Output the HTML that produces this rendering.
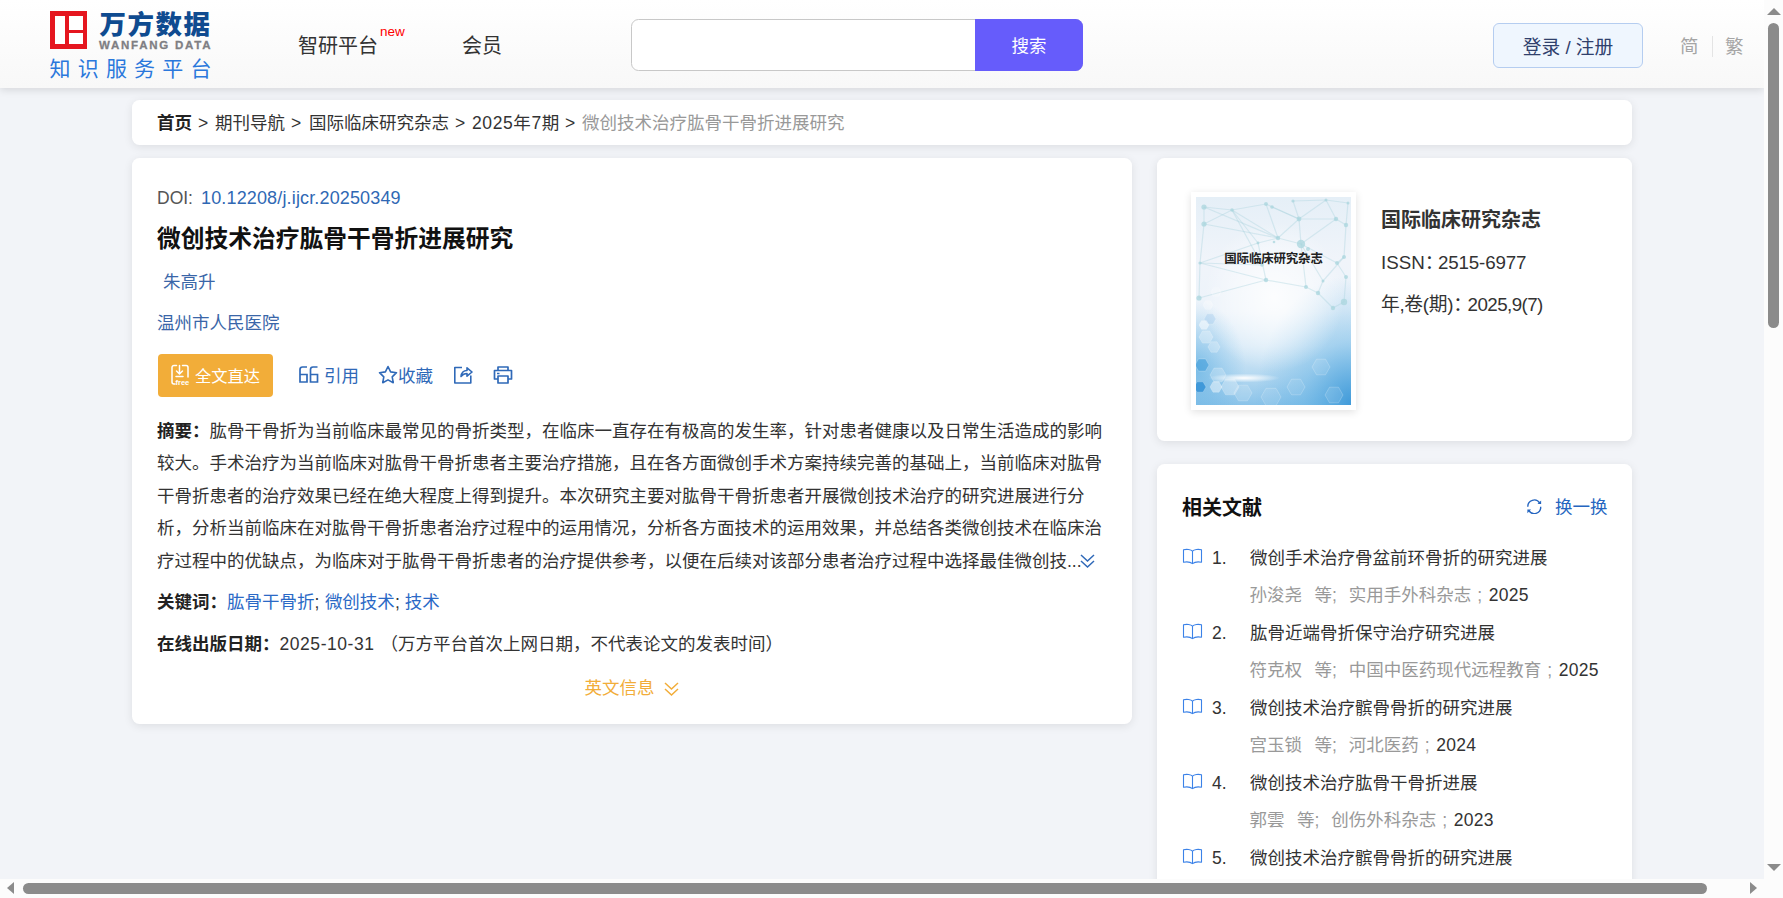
<!DOCTYPE html>
<html lang="zh-CN">
<head>
<meta charset="utf-8">
<title>微创技术治疗肱骨干骨折进展研究</title>
<style>
*{box-sizing:border-box;margin:0;padding:0}
html,body{width:1783px;height:898px;overflow:hidden}
body{background:#f2f4f8;font-family:"Liberation Sans","Noto Sans CJK SC",sans-serif;color:#333;position:relative;font-size:17.5px}
a{text-decoration:none;color:inherit}
.abs{position:absolute}
/* header */
#hdr{position:absolute;left:0;top:0;width:1764px;height:88px;background:linear-gradient(#ffffff,#f8f8f8);box-shadow:0 2px 8px rgba(0,0,0,.12)}
.logo-sq{position:absolute;left:50px;top:11px;width:37px;height:38px;background:#e5161f}
.logo-sq i{position:absolute;background:#fff}
.logo-cn{position:absolute;left:99.5px;top:6.500px;font-size:26.500px;font-weight:900;color:#0f4b90;letter-spacing:1.500px;line-height:36px;white-space:nowrap}
.logo-en{position:absolute;left:99px;top:38px;font-size:11.500px;font-weight:bold;color:#7f7f83;letter-spacing:1.750px;-webkit-text-stroke:.3px #7f7f83;line-height:14px;white-space:nowrap}
.logo-sub{position:absolute;left:49.500px;top:56px;font-size:21px;color:#2a78dc;letter-spacing:7.200px;line-height:26px;white-space:nowrap}
.nav{position:absolute;top:31.500px;font-size:20px;line-height:28px;color:#333;white-space:nowrap}
.new{position:absolute;left:380px;top:23px;font-size:13.5px;line-height:18px;color:#f00}
#sbox{position:absolute;left:631px;top:19px;width:452px;height:52px;border:1px solid #c8c8c8;border-radius:7.500px;background:#fff}
#sbtn{position:absolute;left:975px;top:19px;width:108px;height:52px;background:#665cfb;border-radius:0 7.500px 7.500px 0;color:#fff;font-size:17.500px;line-height:54px;text-align:center}
#login{position:absolute;left:1493px;top:23px;width:150px;height:45px;border:1px solid #b5cdf0;border-radius:6px;background:#eff6fe;color:#30406c;font-size:18.750px;line-height:47.500px;text-align:center}
.lang{position:absolute;top:33.500px;font-size:18.5px;line-height:26px;color:#a5a5a5}
/* cards */
.card{position:absolute;background:#fff;border-radius:7.500px;box-shadow:0 2px 10px rgba(0,0,0,.09)}

#crumb{left:132px;top:100px;width:1500px;height:45px;padding-left:25px;line-height:46px;font-size:17.5px;color:#333;white-space:nowrap}
#crumb b{color:#222}
#crumb .cur{color:#999}
#main{left:132px;top:158px;width:1000px;height:566px}
#main .doi{position:absolute;left:25px;top:27px;line-height:26px;font-size:17.5px;color:#555;white-space:nowrap}
#main .doi a{color:#2f68b4}
#main h1{position:absolute;left:25px;top:63px;font-size:23.75px;line-height:36px;font-weight:bold;color:#111;white-space:nowrap}
#main .au{position:absolute;left:31px;top:111px;font-size:17.5px;line-height:26px;color:#3a66a8;white-space:nowrap}
#main .org{position:absolute;left:25px;top:152px;font-size:17.5px;line-height:26px;color:#3a66a8;white-space:nowrap}
#ftbtn{position:absolute;left:26px;top:196px;width:115px;height:43px;border-radius:4px;background:#f2ad39;color:#fff;font-size:16.25px;line-height:45px;white-space:nowrap}
#ftbtn span{position:absolute;left:37px;top:0}
.op{position:absolute;top:205px;font-size:17.5px;line-height:26px;color:#2f69b8;white-space:nowrap}
.ico{position:absolute}
#abs{position:absolute;left:25px;top:257px;width:960px;font-size:17.5px;line-height:32.400px;color:#333}
#abs b,.row b{color:#222}
.row{position:absolute;left:25px;font-size:17.5px;line-height:26px;color:#333;white-space:nowrap}
.row a{color:#2b69c6}
#en{position:absolute;left:452.500px;top:517px;font-size:17.5px;line-height:26px;color:#f2ad39;white-space:nowrap}
#j{left:1157px;top:158px;width:475px;height:283px}
#cover{position:absolute;left:34px;top:34px;width:165px;height:218px;background:#fff;box-shadow:0 2px 8px rgba(0,0,0,.12)}
#cover svg{position:absolute;left:5px;top:5px}
#j .jn{position:absolute;left:224px;top:48px;font-size:20px;font-weight:bold;line-height:28px;color:#333;white-space:nowrap}
#j .ji{position:absolute;left:224px;font-size:18.750px;line-height:26px;color:#333;white-space:nowrap}
#rel{left:1157px;top:464px;width:475px;height:460px}
#rel h3{position:absolute;left:25px;top:30px;font-size:20px;line-height:28px;font-weight:bold;color:#111}
#rel .chg{position:absolute;left:398px;top:30px;font-size:17.5px;line-height:26px;color:#2565c0;white-space:nowrap}
.it{position:absolute;left:0;width:475px;height:75px}
.it .n{position:absolute;left:55px;top:1px;font-size:17.5px;line-height:26px;color:#333}
.it .t{position:absolute;left:93px;top:1px;font-size:17.5px;line-height:26px;color:#333;white-space:nowrap}
.it .s{position:absolute;left:92.500px;top:38px;font-size:17.5px;line-height:26px;color:#999;white-space:nowrap}
.it .s i{font-style:normal;color:#333}
.it svg{position:absolute;left:25px;top:4px}
/* scrollbars */
#vs{position:absolute;left:1764px;top:0;width:19px;height:879px;background:#fcfcfc}
#hs{position:absolute;left:0;top:879px;width:1783px;height:19px;background:#fcfcfc}
.thumb{position:absolute;background:#8b8b8b;border-radius:6px}
.tri{position:absolute;width:0;height:0;border-style:solid}
.l{letter-spacing:.55px}
.seg{position:absolute;top:0}
</style>
</head>
<body>
<div id="hdr">
  <div class="logo-sq"><i style="left:5px;top:5px;width:10px;height:28px"></i><i style="left:19px;top:5px;width:14px;height:14px"></i><i style="left:19px;top:22px;width:14px;height:11px"></i></div>
  <div class="logo-cn">万方数据</div>
  <div class="logo-en">WANFANG DATA</div>
  <div class="logo-sub">知识服务平台</div>
  <div class="nav" style="left:298px">智研平台</div><div class="new">new</div>
  <div class="nav" style="left:462px">会员</div>
  <div id="sbox"></div><div id="sbtn">搜索</div>
  <div id="login">登录 / 注册</div>
  <div class="lang" style="left:1680px">简</div>
  <div class="abs" style="left:1712px;top:36px;width:1px;height:21px;background:#e4e4e4"></div>
  <div class="lang" style="left:1725px">繁</div>
</div>

<div class="card" id="crumb"><b class="seg" style="left:25px">首页</b><span class="seg" style="left:66px">&gt;</span><span class="seg" style="left:83px">期刊导航</span><span class="seg" style="left:159px">&gt;</span><span class="seg" style="left:177px">国际临床研究杂志</span><span class="seg" style="left:323px">&gt;</span><span class="seg l" style="left:340px;letter-spacing:.6px">2025年7期</span><span class="seg" style="left:433px">&gt;</span><span class="seg cur" style="left:450px">微创技术治疗肱骨干骨折进展研究</span></div>

<div class="card" id="main">
  <div class="doi"><span style="display:inline-block;width:44px">DOI:</span><a style="letter-spacing:.15px;font-size:18px">10.12208/j.ijcr.20250349</a></div>
  <h1>微创技术治疗肱骨干骨折进展研究</h1>
  <div class="au">朱高升</div>
  <div class="org">温州市人民医院</div>
  <div id="ftbtn">
    <svg class="ico" style="left:12px;top:10px" width="22" height="22" viewBox="0 0 22 22" fill="none" stroke="#fff" stroke-width="1.5" stroke-linecap="round" stroke-linejoin="round">
      <path d="M6.5 1.5H4a2 2 0 0 0-2 2v14.5a2 2 0 0 0 2 2h1M12.500 1.500H16a2 2 0 0 1 2 2V13"/>
      <path d="M9.500 1.500v8M6.500 7l3 3 3-3M6 12.500h7"/>
      <text x="5.500" y="20.500" font-family="Liberation Sans, sans-serif" font-size="7.500" font-weight="bold" fill="#fff" stroke="none">free</text>
    </svg>
    <span>全文直达</span>
  </div>
  <svg class="ico" style="left:167px;top:208px" width="20" height="18" viewBox="0 0 20 18" fill="none" stroke="#2f69b8" stroke-width="1.700">
    <path d="M8 1H3.500Q1 1 1 3.500V16h7V8.500H1M18.500 1H14Q11.500 1 11.500 3.500V16h7V8.500h-7"/>
  </svg>
  <div class="op" style="left:192px">引用</div>
  <svg class="ico" style="left:246px;top:207px" width="20" height="20" viewBox="0 0 20 20" fill="none" stroke="#2f69b8" stroke-width="1.600" stroke-linejoin="round">
    <path d="M10 1.500l2.600 5.400 5.900.8-4.300 4.100 1.050 5.900L10 14.900l-5.250 2.800 1.050-5.900L1.500 7.700l5.900-.8z"/>
  </svg>
  <div class="op" style="left:266px">收藏</div>
  <svg class="ico" style="left:321px;top:207px" width="20" height="20" viewBox="0 0 20 20" fill="none" stroke="#2f69b8" stroke-width="1.600" stroke-linejoin="round">
    <path d="M9 2.500H1.800V18h16v-7.500"/>
    <path d="M8 11.500c.5-4 3-6 6-6V2.800L19 7l-5 4.200V8.500c-2.500 0-4.500 1-6 3z"/>
  </svg>
  <svg class="ico" style="left:361px;top:208px" width="20" height="18" viewBox="0 0 20 18" fill="none" stroke="#2f69b8" stroke-width="1.700" stroke-linejoin="round">
    <path d="M5 4.500V1h10v3.500M5 13H1.500V4.500h17V13H15M5 10h10v7H5zM4 7.500h2.500"/>
  </svg>
  <div id="abs"><b>摘要：</b>肱骨干骨折为当前临床最常见的骨折类型，在临床一直存在有极高的发生率，针对患者健康以及日常生活造成的影响较大。手术治疗为当前临床对肱骨干骨折患者主要治疗措施，且在各方面微创手术方案持续完善的基础上，当前临床对肱骨干骨折患者的治疗效果已经在绝大程度上得到提升。本次研究主要对肱骨干骨折患者开展微创技术治疗的研究进展进行分析，分析当前临床在对肱骨干骨折患者治疗过程中的运用情况，分析各方面技术的运用效果，并总结各类微创技术在临床治疗过程中的优缺点，为临床对于肱骨干骨折患者的治疗提供参考，以便在后续对该部分患者治疗过程中选择最佳微创技...<svg width="17" height="16" viewBox="0 0 17 16" fill="none" stroke="#2f69b8" stroke-width="1.500" style="vertical-align:-2px;margin-left:-2.500px"><path d="M2 2l6.500 6L15 2M2 8l6.500 6L15 8"/></svg></div>
  <div class="row kw" style="top:431px"><b>关键词：</b><a>肱骨干骨折</a>;<a style="margin-left:5.500px">微创技术</a>;<a style="margin-left:5px">技术</a></div>
  <div class="row" style="top:473px"><b>在线出版日期：</b><span class="l">2025-10-31</span><span style="margin-left:6px">（万方平台首次上网日期，不代表论文的发表时间）</span></div>
  <div id="en">英文信息 <svg width="17" height="16" viewBox="0 0 17 16" fill="none" stroke="#f2ad39" stroke-width="1.500" style="vertical-align:-3px;margin-left:4px"><path d="M2 2l6.500 6L15 2M2 8l6.500 6L15 8"/></svg></div>
</div>

<div class="card" id="j">
  <div id="cover"><!--COVER--><svg width="155" height="208" viewBox="0 0 155 208">
<defs>
<linearGradient id="cg" x1="0" y1="0" x2="0" y2="1"><stop offset="0" stop-color="#e5eff7"/><stop offset=".3" stop-color="#f0f4fa"/><stop offset=".55" stop-color="#ecf3fa"/><stop offset=".72" stop-color="#d6e9f7"/><stop offset=".87" stop-color="#b2d7f0"/><stop offset="1" stop-color="#8ac3e9"/></linearGradient>
<radialGradient id="cw" cx=".5" cy=".5" r=".5"><stop offset="0" stop-color="#fff" stop-opacity=".85"/><stop offset=".6" stop-color="#fff" stop-opacity=".4"/><stop offset="1" stop-color="#fff" stop-opacity="0"/></radialGradient>
<radialGradient id="cb" cx="1" cy="1" r=".62"><stop offset="0" stop-color="#3d98d8" stop-opacity=".95"/><stop offset=".5" stop-color="#5aaee3" stop-opacity=".4"/><stop offset="1" stop-color="#5aaee3" stop-opacity="0"/></radialGradient>
<radialGradient id="cl" cx="0" cy=".82" r=".32"><stop offset="0" stop-color="#4fa8e0" stop-opacity=".6"/><stop offset="1" stop-color="#5aaee3" stop-opacity="0"/></radialGradient>
<radialGradient id="cf" cx=".5" cy=".5" r=".5"><stop offset="0" stop-color="#fff" stop-opacity="1"/><stop offset="1" stop-color="#fff" stop-opacity="0"/></radialGradient>
</defs>
<rect width="155" height="208" fill="url(#cg)"/>
<rect width="155" height="208" fill="url(#cb)"/>
<rect width="155" height="208" fill="url(#cl)"/>
<ellipse cx="78" cy="100" rx="70" ry="75" fill="url(#cw)"/>
<g stroke="#a9d3dd" stroke-width="1.200" stroke-opacity=".38"><line x1="8" y1="10" x2="36" y2="13"/><line x1="36" y1="13" x2="70" y2="7"/><line x1="8" y1="10" x2="8" y2="27"/><line x1="36" y1="13" x2="8" y2="27"/><line x1="8" y1="27" x2="4" y2="66"/><line x1="36" y1="13" x2="62" y2="46"/><line x1="36" y1="13" x2="82" y2="41"/><line x1="70" y1="7" x2="82" y2="41"/><line x1="76" y1="10" x2="103" y2="22"/><line x1="97" y1="4" x2="103" y2="22"/><line x1="103" y1="22" x2="82" y2="41"/><line x1="103" y1="22" x2="105" y2="47"/><line x1="82" y1="41" x2="105" y2="47"/><line x1="82" y1="41" x2="62" y2="46"/><line x1="62" y1="46" x2="4" y2="66"/><line x1="4" y1="66" x2="3" y2="101"/><line x1="62" y1="46" x2="70" y2="83"/><line x1="105" y1="47" x2="110" y2="90"/><line x1="105" y1="47" x2="127" y2="84"/><line x1="110" y1="90" x2="122" y2="96"/><line x1="122" y1="96" x2="127" y2="84"/><line x1="103" y1="22" x2="140" y2="22"/><line x1="140" y1="22" x2="150" y2="28"/><line x1="150" y1="28" x2="148" y2="60"/><line x1="105" y1="47" x2="140" y2="22"/><line x1="127" y1="84" x2="148" y2="60"/><line x1="122" y1="96" x2="137" y2="111"/><line x1="137" y1="111" x2="148" y2="105"/><line x1="97" y1="4" x2="130" y2="3"/><line x1="130" y1="3" x2="140" y2="22"/><line x1="130" y1="3" x2="152" y2="6"/><line x1="152" y1="6" x2="150" y2="28"/><line x1="103" y1="22" x2="130" y2="3"/><line x1="70" y1="7" x2="103" y2="22"/><line x1="8" y1="10" x2="82" y2="41"/><line x1="4" y1="66" x2="70" y2="83"/><line x1="3" y1="101" x2="70" y2="83"/><line x1="148" y1="60" x2="141" y2="66"/><line x1="141" y1="66" x2="150" y2="80"/><line x1="150" y1="80" x2="148" y2="105"/><line x1="105" y1="47" x2="141" y2="66"/><line x1="70" y1="83" x2="110" y2="90"/><line x1="8" y1="27" x2="82" y2="41"/><line x1="36" y1="13" x2="66" y2="68"/><line x1="66" y1="68" x2="4" y2="66"/></g>
<g fill="#a9d5de" fill-opacity=".75"><circle cx="8" cy="10" r="2.6"/><circle cx="36" cy="13" r="1.8"/><circle cx="70" cy="7" r="2"/><circle cx="76" cy="10" r="1.8"/><circle cx="97" cy="4" r="1.6"/><circle cx="103" cy="22" r="2.4"/><circle cx="82" cy="41" r="2.2"/><circle cx="105" cy="47" r="4.2"/><circle cx="62" cy="46" r="1.4"/><circle cx="8" cy="27" r="2.6"/><circle cx="4" cy="66" r="1.6"/><circle cx="3" cy="101" r="2.6"/><circle cx="70" cy="83" r="2.2"/><circle cx="110" cy="90" r="2"/><circle cx="122" cy="96" r="2.2"/><circle cx="127" cy="84" r="1.5"/><circle cx="150" cy="28" r="2.2"/><circle cx="140" cy="22" r="2.2"/><circle cx="148" cy="60" r="2"/><circle cx="137" cy="111" r="2.2"/><circle cx="148" cy="105" r="3.2"/><circle cx="130" cy="3" r="1.5"/><circle cx="152" cy="6" r="1.5"/><circle cx="141" cy="66" r="2"/><circle cx="150" cy="80" r="2"/><circle cx="112" cy="52" r="2"/><circle cx="78" cy="45" r="1.3"/><circle cx="66" cy="68" r="1.8"/></g>
<polygon points="13.0,168.0 9.5,174.1 2.5,174.1 -1.0,168.0 2.5,161.9 9.5,161.9" fill="#3d9ad8" fill-opacity="0.55" stroke="#fff" stroke-opacity=".3" stroke-width=".7"/><polygon points="10.0,190.0 7.0,195.2 1.0,195.2 -2.0,190.0 1.0,184.8 7.0,184.8" fill="#2f8fd4" fill-opacity="0.8" stroke="#fff" stroke-opacity=".3" stroke-width=".7"/><polygon points="30.0,178.0 26.0,184.9 18.0,184.9 14.0,178.0 18.0,171.1 26.0,171.1" fill="#fff" fill-opacity="0.22" stroke="#fff" stroke-opacity=".3" stroke-width=".7"/><polygon points="43.0,190.0 38.5,197.8 29.5,197.8 25.0,190.0 29.5,182.2 38.5,182.2" fill="#fff" fill-opacity="0.3" stroke="#fff" stroke-opacity=".3" stroke-width=".7"/><polygon points="17.0,140.0 13.5,146.1 6.5,146.1 3.0,140.0 6.5,133.9 13.5,133.9" fill="#fff" fill-opacity="0.3" stroke="#fff" stroke-opacity=".3" stroke-width=".7"/><polygon points="20.0,122.0 17.0,127.2 11.0,127.2 8.0,122.0 11.0,116.8 17.0,116.8" fill="#9cc7ea" fill-opacity="0.35" stroke="#fff" stroke-opacity=".3" stroke-width=".7"/><polygon points="13.0,128.0 10.5,132.3 5.5,132.3 3.0,128.0 5.5,123.7 10.5,123.7" fill="#fff" fill-opacity="0.5" stroke="#fff" stroke-opacity=".3" stroke-width=".7"/><polygon points="56.0,196.0 51.5,203.8 42.5,203.8 38.0,196.0 42.5,188.2 51.5,188.2" fill="#fff" fill-opacity="0.15" stroke="#fff" stroke-opacity=".3" stroke-width=".7"/><polygon points="134.0,170.0 129.5,177.8 120.5,177.8 116.0,170.0 120.5,162.2 129.5,162.2" fill="#fff" fill-opacity="0.1" stroke="#fff" stroke-opacity=".3" stroke-width=".7"/><polygon points="109.0,190.0 104.5,197.8 95.5,197.8 91.0,190.0 95.5,182.2 104.5,182.2" fill="#fff" fill-opacity="0.08" stroke="#fff" stroke-opacity=".3" stroke-width=".7"/><polygon points="85.0,200.0 80.0,208.7 70.0,208.7 65.0,200.0 70.0,191.3 80.0,191.3" fill="#fff" fill-opacity="0.1" stroke="#fff" stroke-opacity=".3" stroke-width=".7"/><polygon points="147.0,198.0 142.5,205.8 133.5,205.8 129.0,198.0 133.5,190.2 142.5,190.2" fill="#fff" fill-opacity="0.1" stroke="#fff" stroke-opacity=".3" stroke-width=".7"/><polygon points="17.0,108.0 14.5,112.3 9.5,112.3 7.0,108.0 9.5,103.7 14.5,103.7" fill="#fff" fill-opacity="0.3" stroke="#fff" stroke-opacity=".3" stroke-width=".7"/><polygon points="25.0,95.0 22.5,99.3 17.5,99.3 15.0,95.0 17.5,90.7 22.5,90.7" fill="#fff" fill-opacity="0.2" stroke="#fff" stroke-opacity=".3" stroke-width=".7"/><polygon points="24.0,150.0 21.0,155.2 15.0,155.2 12.0,150.0 15.0,144.8 21.0,144.8" fill="#fff" fill-opacity="0.25" stroke="#fff" stroke-opacity=".3" stroke-width=".7"/><polygon points="26.0,190.0 23.0,195.2 17.0,195.2 14.0,190.0 17.0,184.8 23.0,184.8" fill="#fff" fill-opacity="0.45" stroke="#fff" stroke-opacity=".3" stroke-width=".7"/>
<ellipse cx="48" cy="181" rx="36" ry="4.500" fill="url(#cf)"/>
<text x="77.500" y="65.500" text-anchor="middle" font-family="Liberation Sans, Noto Sans CJK SC, sans-serif" font-size="12.500" font-weight="bold" fill="#222" letter-spacing="-.2">国际临床研究杂志</text>
</svg><!--/COVER--></div>
  <div class="jn">国际临床研究杂志</div>
  <div class="ji" style="top:92px"><span style="display:inline-block;width:57px">ISSN：</span><span style="letter-spacing:-.15px">2515-6977</span></div>
  <div class="ji" style="top:134px"><span style="display:inline-block;width:86.500px;letter-spacing:-.3px">年,卷(期)：</span><span style="letter-spacing:-.55px">2025,9(7)</span></div>
</div>
<div class="card" id="rel">
  <h3>相关文献</h3>
  <svg class="ico" style="left:369px;top:34.500px" width="16.500" height="15.600" viewBox="0 0 18 17" fill="none" stroke="#2565c0" stroke-width="1.500"><path d="M2 8.500A7 7 0 0 1 15 4.500M16 8.500A7 7 0 0 1 3 12.500"/><path d="M16.500 1.500v4h-4zM1.500 15.500v-4h4z" fill="#2565c0" stroke="none"/></svg>
  <div class="chg">换一换</div>
<div class="it" style="top:80px"><svg width="21" height="17" viewBox="0 0 21 17" fill="none" stroke="#3b82e8" stroke-width="1.100" stroke-linejoin="round"><path d="M10.500 3.200C9 1.400 4.500.9 1.500 1.800V14.200C5 13.600 8.500 14 10.500 15.600 12.500 14 16 13.600 19.500 14.200V1.800C16.500.9 12 1.400 10.500 3.200zM10.500 3.200V15.600"/></svg><div class="n">1.</div><div class="t">微创手术治疗骨盆前环骨折的研究进展</div><div class="s">孙浚尧<span style="margin-left:12.400px">等;</span><span style="margin-left:12px">实用手外科杂志</span><span style="margin-left:6px">;</span><i style="margin-left:6.500px;letter-spacing:.3px">2025</i></div></div>
<div class="it" style="top:155px"><svg width="21" height="17" viewBox="0 0 21 17" fill="none" stroke="#3b82e8" stroke-width="1.100" stroke-linejoin="round"><path d="M10.500 3.200C9 1.400 4.500.9 1.500 1.800V14.200C5 13.600 8.500 14 10.500 15.600 12.500 14 16 13.600 19.500 14.200V1.800C16.500.9 12 1.400 10.500 3.200zM10.500 3.200V15.600"/></svg><div class="n">2.</div><div class="t">肱骨近端骨折保守治疗研究进展</div><div class="s">符克权<span style="margin-left:12.400px">等;</span><span style="margin-left:12px">中国中医药现代远程教育</span><span style="margin-left:6px">;</span><i style="margin-left:6.500px;letter-spacing:.3px">2025</i></div></div>
<div class="it" style="top:230px"><svg width="21" height="17" viewBox="0 0 21 17" fill="none" stroke="#3b82e8" stroke-width="1.100" stroke-linejoin="round"><path d="M10.500 3.200C9 1.400 4.500.9 1.500 1.800V14.200C5 13.600 8.500 14 10.500 15.600 12.500 14 16 13.600 19.500 14.200V1.800C16.500.9 12 1.400 10.500 3.200zM10.500 3.200V15.600"/></svg><div class="n">3.</div><div class="t">微创技术治疗髌骨骨折的研究进展</div><div class="s">宫玉锁<span style="margin-left:12.400px">等;</span><span style="margin-left:12px">河北医药</span><span style="margin-left:6px">;</span><i style="margin-left:6.500px;letter-spacing:.3px">2024</i></div></div>
<div class="it" style="top:305px"><svg width="21" height="17" viewBox="0 0 21 17" fill="none" stroke="#3b82e8" stroke-width="1.100" stroke-linejoin="round"><path d="M10.500 3.200C9 1.400 4.500.9 1.500 1.800V14.200C5 13.600 8.500 14 10.500 15.600 12.500 14 16 13.600 19.500 14.200V1.800C16.500.9 12 1.400 10.500 3.200zM10.500 3.200V15.600"/></svg><div class="n">4.</div><div class="t">微创技术治疗肱骨干骨折进展</div><div class="s">郭雲<span style="margin-left:12.400px">等;</span><span style="margin-left:12px">创伤外科杂志</span><span style="margin-left:6px">;</span><i style="margin-left:6.500px;letter-spacing:.3px">2023</i></div></div>
<div class="it" style="top:380px"><svg width="21" height="17" viewBox="0 0 21 17" fill="none" stroke="#3b82e8" stroke-width="1.100" stroke-linejoin="round"><path d="M10.500 3.200C9 1.400 4.500.9 1.500 1.800V14.200C5 13.600 8.500 14 10.500 15.600 12.500 14 16 13.600 19.500 14.200V1.800C16.500.9 12 1.400 10.500 3.200zM10.500 3.200V15.600"/></svg><div class="n">5.</div><div class="t">微创技术治疗髌骨骨折的研究进展</div></div>
</div>
<div id="vs"><div class="tri" style="left:2.500px;top:8px;border-width:0 7px 7px 7px;border-color:transparent transparent #8b8b8b transparent"></div><div class="thumb" style="left:4px;top:22.500px;width:11px;height:305.500px"></div><div class="tri" style="left:2.500px;top:864px;border-width:7px 7px 0 7px;border-color:#8b8b8b transparent transparent transparent"></div></div>
<div id="hs"><div class="tri" style="left:7px;top:2.500px;border-width:6.500px 7px 6.500px 0;border-color:transparent #8b8b8b transparent transparent"></div><div class="thumb" style="left:23px;top:4px;width:1684px;height:11px"></div><div class="tri" style="left:1750px;top:2.500px;border-width:6.500px 0 6.500px 7px;border-color:transparent transparent transparent #8b8b8b"></div></div>
</body>
</html>
